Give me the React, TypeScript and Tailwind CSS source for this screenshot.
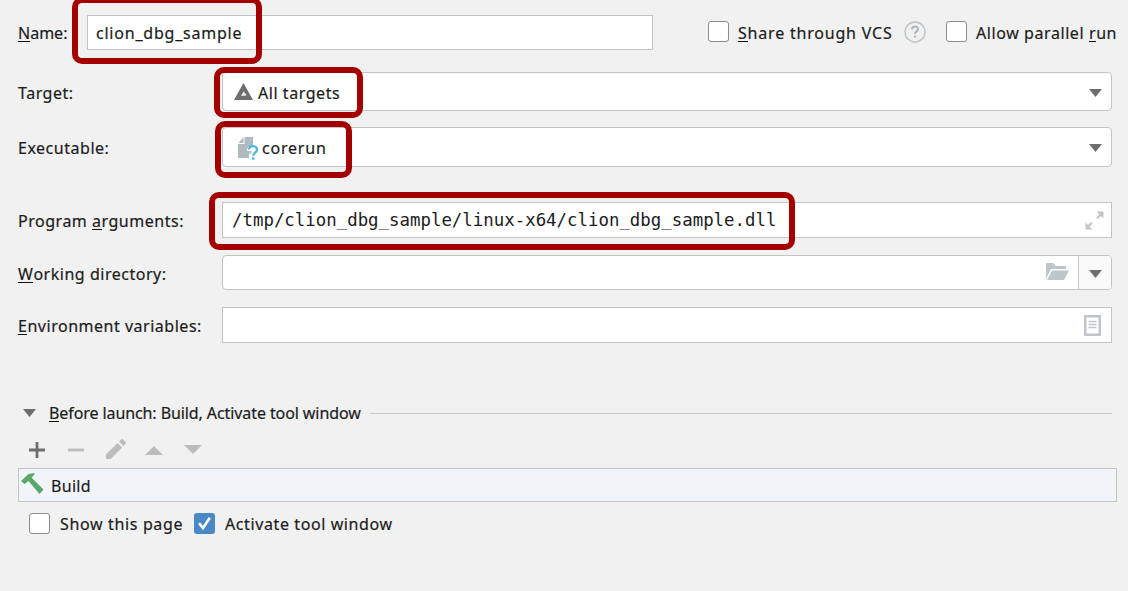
import React from "react";

const Frame = ({ className }: { className: string }) => (
  <div className={`pointer-events-none absolute z-10 rounded-[10px] border-[6px] border-[#a40000] ${className}`} />
);

const Arrow = ({ className = "" }: { className?: string }) => (
  <svg className={`shrink-0 ${className}`} width="13" height="8" viewBox="0 0 13 8">
    <path d="M0 0h13L6.5 8z" fill="currentColor" />
  </svg>
);

const Box = ({ checked = false }: { checked?: boolean }) => (
  <span
    className={
      checked
        ? "flex size-[21px] shrink-0 items-center justify-center rounded-[3px] bg-[#4a88c7]"
        : "size-[21px] shrink-0 rounded-[3px] border border-[#8c8c8c] bg-white"
    }
  >
    {checked && (
      <svg width="21" height="21" viewBox="0 0 21 21" fill="none" stroke="#fff" strokeWidth="2.6">
        <path d="M5 10.2l4 4.8L15.8 4.8" />
      </svg>
    )}
  </span>
);

const Label = ({ children }: { children: React.ReactNode }) => (
  <span className="w-[204px] shrink-0 translate-y-[1px] tracking-[0.52px]">{children}</span>
);

const Key = ({ children }: { children: string }) => (
  <span className="inline-block h-[19px] border-b border-[#111] leading-[20px]">{children}</span>
);

export default function App() {
  return (
    <div className="flex h-[591px] w-[1128px] flex-col overflow-hidden bg-[#f1f1f1] pl-[18px] font-['Noto_Sans',sans-serif] text-[16px] leading-[20px] whitespace-pre text-[#1c1c1c] [-webkit-text-stroke:0.2px_#1c1c1c]">
      <div className="relative mt-[15px] flex h-[35px] items-center">
        <span className="w-[69px]"><Key>N</Key>ame:</span>
        <div className="flex h-[35px] w-[566px] items-center border border-[#c4c4c4] bg-white pl-2 tracking-[0.78px]">
          clion_dbg_sample
        </div>
        <div className="ml-[55px] flex -translate-y-[1px] items-center">
          <Box />
        </div>
        <span className="ml-[9px] w-[155px] tracking-[0.8px]"><Key>S</Key>hare through VCS</span>
        <svg className="ml-[11px] shrink-0 -translate-y-[1px]" width="22" height="22" viewBox="0 0 22 22">
          <circle cx="11" cy="11" r="10" fill="none" stroke="#b9c1c6" strokeWidth="1.3" />
          <path d="M8 8.5c0-4 6-4 6-.5 0 2.500-3 2.300-3 5" fill="none" stroke="#aeb4b8" strokeWidth="2" />
          <path d="M10 14.500h2.100v2H10z" fill="#aeb4b8" />
        </svg>
        <div className="ml-5 flex -translate-y-[1px]"><Box /></div>
        <span className="ml-[9px] tracking-[0.58px]">Allow parallel <Key>r</Key>un</span>
        <Frame className="-top-[18px] left-[54px] h-[67px] w-[190px]" />
      </div>

      <div className="relative mt-[22px] flex h-[39px] items-center">
        <Label>Target:</Label>
        <div className="flex h-full w-[890px] items-center rounded-[4px] border border-[#c4c4c4] bg-white">
          <svg className="ml-[11px]" width="19" height="17" viewBox="0 0 19 17">
            <path fillRule="evenodd" d="M9.500 0L19 17H0zM9.800 8.500L7 12.800l5.500-.3z" fill="#6e6e6e" />
          </svg>
          <span className="ml-[5px] translate-y-[1px] tracking-[0.55px]">All targets</span>
          <Arrow className="mr-[9px] ml-auto translate-y-[1px] text-[#6e6e6e]" />
        </div>
        <Frame className="-top-[5px] left-[196px] h-[51px] w-[149px]" />
      </div>

      <div className="relative mt-[16px] flex h-[40px] items-center">
        <Label>Executable:</Label>
        <div className="flex h-full w-[890px] items-center rounded-[4px] border border-[#c4c4c4] bg-white">
          <svg className="ml-[14px] translate-x-[1px] translate-y-[1px]" width="21" height="24" viewBox="0 0 21 24">
            <path d="M6.500 1H15v8.500c-4 0-6 2-6 5.500h4.500v2.500H11V22H0V8h6.500z" fill="#afb9c0" />
            <path d="M5.500 1v6H.5z" fill="#afb9c0" />
            <path d="M11 13.500c.3-4.500 8-4.300 8 .2 0 2.900-3.800 3-3.800 6" fill="none" stroke="#4cb7e3" strokeWidth="2.300" />
            <path d="M14 21.300h2.500v2.400H14z" fill="#4cb7e3" />
          </svg>
          <span className="ml-1 translate-y-[1px] tracking-[0.8px]">corerun</span>
          <Arrow className="mr-[9px] ml-auto translate-y-[1px] text-[#6e6e6e]" />
        </div>
        <Frame className="-top-[6px] left-[197px] h-[57px] w-[137px]" />
      </div>

      <div className="relative mt-[35px] flex h-[36px] items-center">
        <Label>Program <Key>a</Key>rguments:</Label>
        <div className="flex h-full w-[890px] items-center border border-[#c4c4c4] bg-white pl-[9px] font-['DejaVu_Sans_Mono',monospace] text-[17.4px] [-webkit-text-stroke:0]">
          /tmp/clion_dbg_sample/linux-x64/clion_dbg_sample.dll
          <svg className="mr-[7px] ml-auto" width="19" height="19" viewBox="0 0 19 19" fill="#bfc6ca">
            <path d="M11.500 .5h7v7L16 5l-3.200 3-1.500-1.500L14.500 3.500zM.5 11.500L3 14l3.200-3 1.500 1.500-3.200 3 3 3h-7z" />
          </svg>
        </div>
        <Frame className="-top-[10px] left-[191px] h-[58px] w-[586px]" />
      </div>

      <div className="mt-[17px] flex h-[35px] items-center">
        <Label><Key>W</Key>orking directory:</Label>
        <div className="flex h-full w-[890px] items-center justify-end overflow-hidden rounded-[4px] border border-[#c4c4c4] bg-white">
          <svg className="mr-[9px] -translate-y-[1px]" width="23" height="17" viewBox="0 0 23 17" fill="#bfc6ca">
            <path d="M0 16V0h7l2.500 3H20v3H5z" />
            <path d="M6 7.500h17L18 17H1z" />
          </svg>
          <div className="flex h-full w-[33px] items-center justify-center border-l border-[#c4c4c4] bg-[#fafafa]">
            <Arrow className="translate-y-[1px] text-[#6e6e6e]" />
          </div>
        </div>
      </div>

      <div className="mt-[17px] flex h-[36px] items-center">
        <Label><Key>E</Key>nvironment variables:</Label>
        <div className="flex h-full w-[890px] items-center justify-end border border-[#c4c4c4] bg-white pr-[10px]">
          <svg width="17" height="21" viewBox="0 0 17 21" fill="none" stroke="#bfc6ca">
            <path d="M1.250 1.250h14.500v18.500H1.250z" strokeWidth="2.500" />
            <path d="M4.500 6.500h8M4.500 9.500h8M4.500 12.500h8" strokeWidth="1.400" />
          </svg>
        </div>
      </div>

      <div className="mt-[60px] flex h-5 items-center">
        <Arrow className="ml-[5px] text-[#6e6e6e]" />
        <span className="ml-[13px] w-[312px] shrink-0 tracking-[-0.09px]"><Key>B</Key>efore launch: Build, Activate tool window</span>
        <div className="ml-[9px] h-px w-[742px] bg-[#cbcbcb]" />
      </div>

      <div className="mt-[15px] flex h-6 items-center text-[#bcbcbc]">
        <svg className="ml-[11px]" width="16" height="16" viewBox="0 0 16 16" stroke="#6e6e6e" strokeWidth="2.800">
          <path d="M8 0v16M0 8h16" />
        </svg>
        <svg className="ml-[23px]" width="16" height="16" viewBox="0 0 16 16" stroke="currentColor" strokeWidth="2.800">
          <path d="M0 8h16" />
        </svg>
        <svg className="ml-[22px] -translate-y-[1px]" width="20" height="20" viewBox="0 0 20 20" fill="currentColor">
          <path d="M0 20v-4.500L11.500 4l4.500 4.500L4.500 20zM13 2.500l2-2q1-1 2 0L19.500 3q1 1 0 2l-2 2z" />
        </svg>
        <svg className="ml-[19px]" width="18" height="9" viewBox="0 0 18 9" fill="currentColor">
          <path d="M9 0l9 9H0z" />
        </svg>
        <svg className="ml-[21px] -translate-y-[1px]" width="18" height="9" viewBox="0 0 18 9" fill="currentColor">
          <path d="M0 0h18L9 9z" />
        </svg>
      </div>

      <div className="mt-[6px] flex h-[34px] w-[1099px] items-center border border-[#c4c4c4] bg-[#f1f5fa]">
        <svg className="ml-[2px] -translate-y-[1px]" width="23" height="22" viewBox="0 0 23 22" fill="#59a869">
          <path d="M0 8L7.500 1l6-1-.500 2-2.500 2.500 12 12-4 4.500L7.500 8 3.500 11z" />
        </svg>
        <span className="ml-[7px] translate-y-[1px] tracking-[0.3px]">Build</span>
      </div>

      <div className="mt-[9px] flex h-6 items-center">
        <div className="ml-[11px] flex"><Box /></div>
        <span className="ml-[10px] w-[124px] translate-y-[1px] tracking-[0.65px]">Show this page</span>
        <div className="ml-[10px] flex"><Box checked /></div>
        <span className="ml-[10px] translate-y-[1px] tracking-[0.6px]">Activate tool window</span>
      </div>
    </div>
  );
}
